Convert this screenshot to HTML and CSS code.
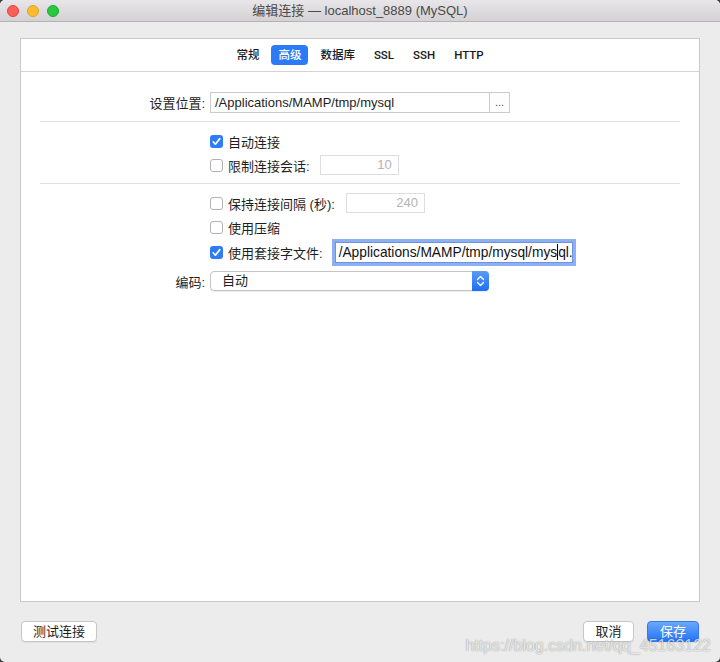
FILE: index.html
```html
<!DOCTYPE html>
<html lang="zh-CN">
<head>
<meta charset="utf-8">
<title>编辑连接</title>
<link rel="stylesheet" href="styles.css">
</head>
<body>
<div class="window">
  <div class="titlebar">
    <div class="lights">
      <span class="light red"></span><span class="light yellow"></span><span class="light green"></span>
    </div>
    <div class="title">编辑连接 — localhost_8889 (MySQL)</div>
    <div></div>
  </div>
  <div class="content">
    <div class="panel">
      <div class="tabs">
        <span class="tab">常规</span>
        <span class="tab active">高级</span>
        <span class="tab">数据库</span>
        <span class="tab latin">SSL</span>
        <span class="tab latin">SSH</span>
        <span class="tab latin">HTTP</span>
      </div>
      <div class="form">
        <div class="row">
          <span class="label">设置位置:</span>
          <div class="field path">/Applications/MAMP/tmp/mysql</div>
          <div class="browse">...</div>
        </div>
        <div class="sep"></div>
        <div class="crow first">
          <span class="cb checked"><svg viewBox="0 0 13 13" width="13" height="13"><path d="M3.2 6.8 L5.4 9.2 L9.8 3.6" fill="none" stroke="#fff" stroke-width="1.7" stroke-linecap="round" stroke-linejoin="round"/></svg></span>
          <span class="ctext">自动连接</span>
        </div>
        <div class="crow">
          <span class="cb"></span>
          <span class="ctext">限制连接会话:</span>
          <div class="field num limit">10</div>
        </div>
        <div class="sep second"></div>
        <div class="crow first">
          <span class="cb"></span>
          <span class="ctext">保持连接间隔 (秒):</span>
          <div class="field num keep">240</div>
        </div>
        <div class="crow">
          <span class="cb"></span>
          <span class="ctext">使用压缩</span>
        </div>
        <div class="crow socket-row">
          <span class="cb checked"><svg viewBox="0 0 13 13" width="13" height="13"><path d="M3.2 6.8 L5.4 9.2 L9.8 3.6" fill="none" stroke="#fff" stroke-width="1.7" stroke-linecap="round" stroke-linejoin="round"/></svg></span>
          <span class="ctext">使用套接字文件:</span>
          <div class="field socket"><span>/Applications/MAMP/tmp/mysql/mys</span><span class="caret"></span><span>ql.sock</span></div>
        </div>
        <div class="row enc-row">
          <span class="label">编码:</span>
          <div class="select">
            <span class="select-text">自动</span>
            <span class="stepper"><svg viewBox="0 0 17 18" width="17" height="18"><path d="M5.5 7.5 L8.5 4.5 L11.5 7.5 M5.5 10.5 L8.5 13.5 L11.5 10.5" fill="none" stroke="#fff" stroke-width="1.4" stroke-linecap="round" stroke-linejoin="round"/></svg></span>
          </div>
        </div>
      </div>
    </div>
  </div>
  <div class="footer">
    <button class="btn test">测试连接</button>
    <div class="spacer"></div>
    <button class="btn cancel">取消</button>
    <button class="btn primary">保存</button>
  </div>
  <div class="watermark">https://blog.csdn.net/qq_45163122</div>
</div>
</body>
</html>
```

FILE: styles.css
```css
html, body {
  margin: 0;
  padding: 0;
}
body {
  background: #3a3a3a;
  font-family: "Liberation Sans", "Noto Sans CJK SC", sans-serif;
  font-size: 13px;
  color: #1e1e1e;
}
.window {
  width: 720px;
  height: 662px;
  background: #ececec;
  border-radius: 5px;
  display: flex;
  flex-direction: column;
  overflow: hidden;
  position: relative;
}
.titlebar {
  height: 21px;
  flex: none;
  border-bottom: 1px solid #b3b3b3;
  background: linear-gradient(#e8e6e8, #d3d1d3);
  display: grid;
  grid-template-columns: 1fr auto 1fr;
  align-items: center;
}
.lights {
  display: flex;
  gap: 8px;
  padding-left: 7px;
}
.light {
  width: 12px;
  height: 12px;
  border-radius: 50%;
  box-sizing: border-box;
}
.red { background: #fc5f57; border: 1px solid #e0443e; }
.yellow { background: #fdbc2e; border: 1px solid #dea123; }
.green { background: #28c840; border: 1px solid #1aab29; }
.title {
  color: #4a4a4a;
  font-size: 13px;
  line-height: 21px;
}
.content {
  flex: 1;
  display: flex;
  flex-direction: column;
  padding: 16px 20px 0;
}
.panel {
  flex: 1;
  background: #fff;
  border: 1px solid #c9c9c9;
  display: flex;
  flex-direction: column;
}
.tabs {
  height: 32px;
  flex: none;
  border-bottom: 1px solid #d4d4d4;
  display: flex;
  justify-content: center;
  align-items: center;
  gap: 5px;
}
.tab {
  padding: 0 7px;
  height: 20px;
  line-height: 20px;
  font-family: "Roboto", "Noto Sans CJK SC", sans-serif;
  font-size: 11.5px;
  font-weight: 500;
  border-radius: 4px;
  color: #1a1a1a;
}
.tab.active {
  background: #2b7bf6;
  color: #fff;
}
.form {
  padding: 20px 19px 0;
}
.row {
  display: flex;
  align-items: center;
  height: 21px;
}
.label {
  width: 165px;
  margin-right: 5px;
  text-align: right;
  color: #1e1e1e;
}
.field {
  box-sizing: border-box;
  border: 1px solid #cbcbcb;
  background: #fff;
  white-space: nowrap;
  overflow: hidden;
}
.path {
  width: 280px;
  height: 21px;
  line-height: 19px;
  padding: 0 4px;
}
.browse {
  width: 20px;
  height: 21px;
  box-sizing: border-box;
  border: 1px solid #cbcbcb;
  border-left: none;
  background: #fdfdfd;
  color: #555;
  font-size: 11px;
  line-height: 18px;
  text-align: center;
}
.sep {
  height: 1px;
  background: #e0e0e0;
  margin: 8px 0 9px;
}
.crow {
  display: flex;
  align-items: center;
  height: 20px;
  padding-left: 170px;
  margin-top: 4px;
}
.crow.first {
  margin-top: 0;
}
.cb {
  width: 13px;
  height: 13px;
  box-sizing: border-box;
  border: 1px solid #b2b2b2;
  border-radius: 3px;
  background: #fff;
  flex: none;
  display: flex;
}
.cb.checked {
  border: none;
  background: #2d7cf6;
}
.ctext {
  margin-left: 5px;
}
.num {
  width: 79px;
  height: 20px;
  line-height: 18px;
  text-align: right;
  padding-right: 6px;
  color: #b3b3b3;
  border-color: #dedede;
}
.limit {
  margin-left: 10px;
}
.keep {
  margin-left: 11px;
}
.socket-row {
  margin-top: 5px;
}
.socket {
  margin-left: 12px;
  width: 238px;
  height: 21px;
  flex: none;
  padding: 0 3px;
  border-color: #6d93e0;
  box-shadow: 0 0 0 3px #8cb0f2;
  color: #111;
  font-size: 13.75px;
  display: flex;
  align-items: center;
}
.caret {
  width: 1px;
  height: 16px;
  background: #000;
  flex: none;
}
.enc-row {
  margin-top: 9px;
  height: 20px;
}
.select {
  width: 279px;
  height: 20px;
  box-sizing: border-box;
  border: 1px solid #c4c4c4;
  border-radius: 4px;
  background: #fff;
  box-shadow: 0 1px 1px rgba(0, 0, 0, 0.08);
  display: flex;
  align-items: stretch;
}
.select-text {
  flex: 1;
  padding-left: 11px;
  line-height: 18px;
}
.stepper {
  width: 17px;
  flex: none;
  margin: -1px -1px -1px 0;
  border-radius: 0 4px 4px 0;
  background: linear-gradient(#5a9bf8, #1c6ff5);
  display: flex;
  align-items: center;
  justify-content: center;
}
.footer {
  height: 60px;
  flex: none;
  box-sizing: border-box;
  padding: 19px 21px 0;
  display: flex;
  align-items: flex-start;
  gap: 13px;
}
.spacer {
  flex: 1;
}
.btn {
  height: 21px;
  box-sizing: border-box;
  border: 1px solid #c6c6c6;
  border-radius: 4px;
  background: #fff;
  box-shadow: 0 1px 0 rgba(0, 0, 0, 0.05);
  font-family: "Liberation Sans", "Noto Sans CJK SC", sans-serif;
  font-size: 13px;
  line-height: 19px;
  color: #1e1e1e;
  padding: 0;
}
.test { width: 76px; }
.cancel { width: 51px; }
.primary {
  width: 52px;
  color: #fff;
  border-color: #3479ee;
  background: linear-gradient(#6aa8fb, #2474f6);
}
.watermark {
  position: absolute;
  right: 9px;
  bottom: 7px;
  font-family: "Liberation Sans", sans-serif;
  font-size: 16px;
  color: rgba(255, 255, 255, 0.75);
  text-shadow: 0 0 1px rgba(0, 0, 0, 0.35), 0 0 2px rgba(0, 0, 0, 0.15);
  pointer-events: none;
}
```
